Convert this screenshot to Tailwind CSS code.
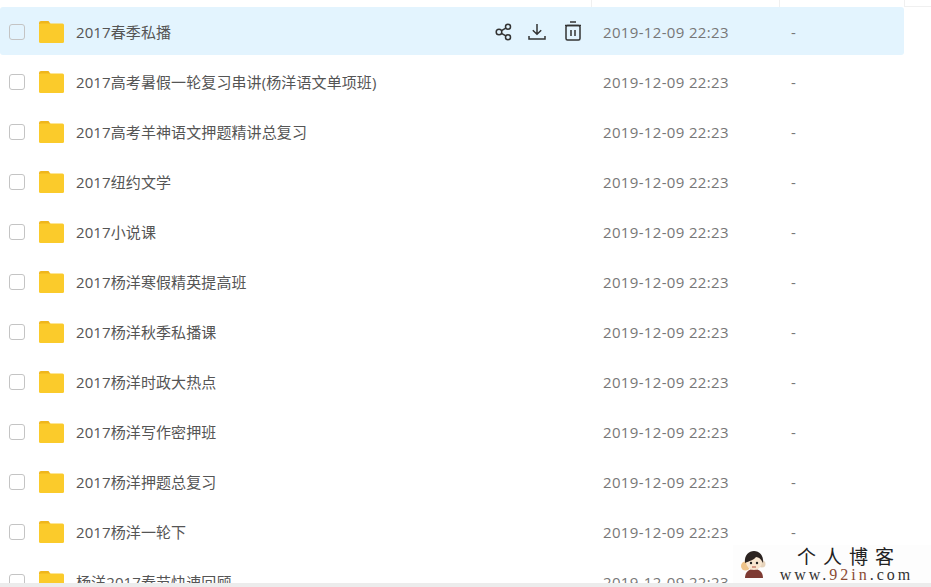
<!DOCTYPE html>
<html>
	<head>
		<meta charset="UTF-8" />
		<title>文件列表</title>
		<script src="https://cdn.jsdelivr.net/npm/@tailwindcss/browser@4"></script>
	</head>

	<body class="bg-white overflow-hidden font-['Open_Sans','Noto_Sans_CJK_SC',sans-serif]">
		<div class="relative w-[931px] h-[587px] overflow-hidden">
			<!-- header remains -->
			<div class="flex h-[7px]">
				<div class="w-[592px] border-r border-[#f0f0f0]"></div>
				<div class="w-[188px] border-r border-[#f0f0f0]"></div>
				<div class="w-[125px] border-r border-[#f0f0f0]"></div>
				<div class="flex-1 border-b border-[#f0f0f0]"></div>
			</div>

			<!-- rows -->
			<div class="w-[904px] h-[576px] overflow-hidden text-[15px] leading-[20px] tracking-[0.1px] text-[#555]">
				<div class="flex items-center h-[48px] pt-[2px] mb-[2px] bg-[#e3f4fe] rounded-[3px]">
					<span class="ml-[9px] w-4 h-4 rounded-[3px] border border-[#c4c4c4]"></span>
					<svg class="ml-[14px] w-[25px] h-[22px]" viewBox="0 0 25 22"><path fill="#efb61c" d="M0 2a2 2 0 0 1 2-2h7.500l2.500 3.500H0z"/><rect fill="#fbcb2b" y="2.500" width="25" height="19.500" rx="1.500"/></svg>
					<span class="ml-[12px] flex-1">2017春季私播</span>
					<svg class="w-[18px] h-[18px]" viewBox="0 0 18 18" fill="none" stroke="#333" stroke-width="1.500"><circle cx="4" cy="9" r="2.800"/><circle cx="13" cy="3.800" r="2.500"/><circle cx="13" cy="14.200" r="2.500"/><path d="M6.500 7.600l4.300-2.500M6.500 10.400l4.300 2.500"/></svg>
					<svg class="ml-[15px] w-[18px] h-[18px]" viewBox="0 0 18 18" fill="none" stroke="#333" stroke-width="1.500"><path d="M9 1v10M4.800 7.200L9 11.200l4.200-4M1 13v3h16v-3"/></svg>
					<svg class="ml-[18px] w-[18px] h-[20px] overflow-visible" viewBox="0 1 18 20" fill="none" stroke="#333" stroke-width="1.500"><path d="M6 1h6M1 4.500h16"/><rect x="2" y="4.500" width="14" height="14.500" rx="1.500"/><path d="M7 9v6M11 9v6"/></svg>
					<span class="ml-[21px] w-[188px] text-[#777] tracking-[0.34px]">2019-12-09 22:23</span>
					<span class="w-[113px] text-[#777]">-</span>
				</div>
				<div class="flex items-center h-[50px]">
					<span class="ml-[9px] w-4 h-4 rounded-[3px] border border-[#c4c4c4]"></span>
					<svg class="ml-[14px] w-[25px] h-[22px]" viewBox="0 0 25 22"><path fill="#efb61c" d="M0 2a2 2 0 0 1 2-2h7.500l2.500 3.500H0z"/><rect fill="#fbcb2b" y="2.500" width="25" height="19.500" rx="1.500"/></svg>
					<span class="ml-[12px] flex-1">2017高考暑假一轮复习串讲(杨洋语文单项班)</span>
					<span class="w-[188px] text-[#777] tracking-[0.34px]">2019-12-09 22:23</span>
					<span class="w-[113px] text-[#777]">-</span>
				</div>
				<div class="flex items-center h-[50px]">
					<span class="ml-[9px] w-4 h-4 rounded-[3px] border border-[#c4c4c4]"></span>
					<svg class="ml-[14px] w-[25px] h-[22px]" viewBox="0 0 25 22"><path fill="#efb61c" d="M0 2a2 2 0 0 1 2-2h7.500l2.500 3.500H0z"/><rect fill="#fbcb2b" y="2.500" width="25" height="19.500" rx="1.500"/></svg>
					<span class="ml-[12px] flex-1">2017高考羊神语文押题精讲总复习</span>
					<span class="w-[188px] text-[#777] tracking-[0.34px]">2019-12-09 22:23</span>
					<span class="w-[113px] text-[#777]">-</span>
				</div>
				<div class="flex items-center h-[50px]">
					<span class="ml-[9px] w-4 h-4 rounded-[3px] border border-[#c4c4c4]"></span>
					<svg class="ml-[14px] w-[25px] h-[22px]" viewBox="0 0 25 22"><path fill="#efb61c" d="M0 2a2 2 0 0 1 2-2h7.500l2.500 3.500H0z"/><rect fill="#fbcb2b" y="2.500" width="25" height="19.500" rx="1.500"/></svg>
					<span class="ml-[12px] flex-1">2017纽约文学</span>
					<span class="w-[188px] text-[#777] tracking-[0.34px]">2019-12-09 22:23</span>
					<span class="w-[113px] text-[#777]">-</span>
				</div>
				<div class="flex items-center h-[50px]">
					<span class="ml-[9px] w-4 h-4 rounded-[3px] border border-[#c4c4c4]"></span>
					<svg class="ml-[14px] w-[25px] h-[22px]" viewBox="0 0 25 22"><path fill="#efb61c" d="M0 2a2 2 0 0 1 2-2h7.500l2.500 3.500H0z"/><rect fill="#fbcb2b" y="2.500" width="25" height="19.500" rx="1.500"/></svg>
					<span class="ml-[12px] flex-1">2017小说课</span>
					<span class="w-[188px] text-[#777] tracking-[0.34px]">2019-12-09 22:23</span>
					<span class="w-[113px] text-[#777]">-</span>
				</div>
				<div class="flex items-center h-[50px]">
					<span class="ml-[9px] w-4 h-4 rounded-[3px] border border-[#c4c4c4]"></span>
					<svg class="ml-[14px] w-[25px] h-[22px]" viewBox="0 0 25 22"><path fill="#efb61c" d="M0 2a2 2 0 0 1 2-2h7.500l2.500 3.500H0z"/><rect fill="#fbcb2b" y="2.500" width="25" height="19.500" rx="1.500"/></svg>
					<span class="ml-[12px] flex-1">2017杨洋寒假精英提高班</span>
					<span class="w-[188px] text-[#777] tracking-[0.34px]">2019-12-09 22:23</span>
					<span class="w-[113px] text-[#777]">-</span>
				</div>
				<div class="flex items-center h-[50px]">
					<span class="ml-[9px] w-4 h-4 rounded-[3px] border border-[#c4c4c4]"></span>
					<svg class="ml-[14px] w-[25px] h-[22px]" viewBox="0 0 25 22"><path fill="#efb61c" d="M0 2a2 2 0 0 1 2-2h7.500l2.500 3.500H0z"/><rect fill="#fbcb2b" y="2.500" width="25" height="19.500" rx="1.500"/></svg>
					<span class="ml-[12px] flex-1">2017杨洋秋季私播课</span>
					<span class="w-[188px] text-[#777] tracking-[0.34px]">2019-12-09 22:23</span>
					<span class="w-[113px] text-[#777]">-</span>
				</div>
				<div class="flex items-center h-[50px]">
					<span class="ml-[9px] w-4 h-4 rounded-[3px] border border-[#c4c4c4]"></span>
					<svg class="ml-[14px] w-[25px] h-[22px]" viewBox="0 0 25 22"><path fill="#efb61c" d="M0 2a2 2 0 0 1 2-2h7.500l2.500 3.500H0z"/><rect fill="#fbcb2b" y="2.500" width="25" height="19.500" rx="1.500"/></svg>
					<span class="ml-[12px] flex-1">2017杨洋时政大热点</span>
					<span class="w-[188px] text-[#777] tracking-[0.34px]">2019-12-09 22:23</span>
					<span class="w-[113px] text-[#777]">-</span>
				</div>
				<div class="flex items-center h-[50px]">
					<span class="ml-[9px] w-4 h-4 rounded-[3px] border border-[#c4c4c4]"></span>
					<svg class="ml-[14px] w-[25px] h-[22px]" viewBox="0 0 25 22"><path fill="#efb61c" d="M0 2a2 2 0 0 1 2-2h7.500l2.500 3.500H0z"/><rect fill="#fbcb2b" y="2.500" width="25" height="19.500" rx="1.500"/></svg>
					<span class="ml-[12px] flex-1">2017杨洋写作密押班</span>
					<span class="w-[188px] text-[#777] tracking-[0.34px]">2019-12-09 22:23</span>
					<span class="w-[113px] text-[#777]">-</span>
				</div>
				<div class="flex items-center h-[50px]">
					<span class="ml-[9px] w-4 h-4 rounded-[3px] border border-[#c4c4c4]"></span>
					<svg class="ml-[14px] w-[25px] h-[22px]" viewBox="0 0 25 22"><path fill="#efb61c" d="M0 2a2 2 0 0 1 2-2h7.500l2.500 3.500H0z"/><rect fill="#fbcb2b" y="2.500" width="25" height="19.500" rx="1.500"/></svg>
					<span class="ml-[12px] flex-1">2017杨洋押题总复习</span>
					<span class="w-[188px] text-[#777] tracking-[0.34px]">2019-12-09 22:23</span>
					<span class="w-[113px] text-[#777]">-</span>
				</div>
				<div class="flex items-center h-[50px]">
					<span class="ml-[9px] w-4 h-4 rounded-[3px] border border-[#c4c4c4]"></span>
					<svg class="ml-[14px] w-[25px] h-[22px]" viewBox="0 0 25 22"><path fill="#efb61c" d="M0 2a2 2 0 0 1 2-2h7.500l2.500 3.500H0z"/><rect fill="#fbcb2b" y="2.500" width="25" height="19.500" rx="1.500"/></svg>
					<span class="ml-[12px] flex-1">2017杨洋一轮下</span>
					<span class="w-[188px] text-[#777] tracking-[0.34px]">2019-12-09 22:23</span>
					<span class="w-[113px] text-[#777]">-</span>
				</div>
				<div class="flex items-center h-[50px]">
					<span class="ml-[9px] w-4 h-4 rounded-[3px] border border-[#c4c4c4]"></span>
					<svg class="ml-[14px] w-[25px] h-[22px]" viewBox="0 0 25 22"><path fill="#efb61c" d="M0 2a2 2 0 0 1 2-2h7.500l2.500 3.500H0z"/><rect fill="#fbcb2b" y="2.500" width="25" height="19.500" rx="1.500"/></svg>
					<span class="ml-[12px] flex-1">杨洋2017春节快速回顾</span>
					<span class="w-[188px] text-[#777] tracking-[0.34px]">2019-12-09 22:23</span>
					<span class="w-[113px] text-[#777]">-</span>
				</div>
			</div>
			<div class="h-1 bg-[#ececec]"></div>

			<!-- watermark -->
			<div class="absolute left-[733px] top-[545px] w-[198px] h-[38px] flex items-center bg-[#fdfdfd]">
				<svg class="ml-[8px] w-[25px] h-[27px]" viewBox="0 0 25 27">
					<circle cx="4.500" cy="15" r="4.500" fill="#efc48a"/>
					<circle cx="21" cy="13" r="3.500" fill="#e6d3bb"/>
					<path d="M4 27c0-6 4-9 9-9s9 3 9 9z" fill="#7d3a32"/>
					<circle cx="13" cy="11" r="8" fill="#f8e6d0"/>
					<path d="M4 12C3 4 8 0 13 0s10 4 9 12c-2-4-4-6-7-6-2 3-7 4-11 6z" fill="#2b2320"/>
					<circle cx="10" cy="12" r="1.200" fill="#222"/><circle cx="16" cy="12" r="1.200" fill="#222"/>
					<path d="M11 16h4" stroke="#b04a3a" stroke-width="1"/>
				</svg>
				<div class="ml-[14px] w-[133px] flex flex-col items-center leading-none">
					<span class="ml-[5px] h-[20px] leading-[20px] text-[19px] tracking-[7px] text-[#222] font-['Noto_Sans_CJK_SC',sans-serif]">个人博客</span>
					<span class="mt-[1px] text-[16px] tracking-[3px] text-[#333] font-['Liberation_Serif',serif]">www.<span class="text-[#8a4a32]">92in</span>.com</span>
				</div>
			</div>
		</div>
	</body>
</html>
